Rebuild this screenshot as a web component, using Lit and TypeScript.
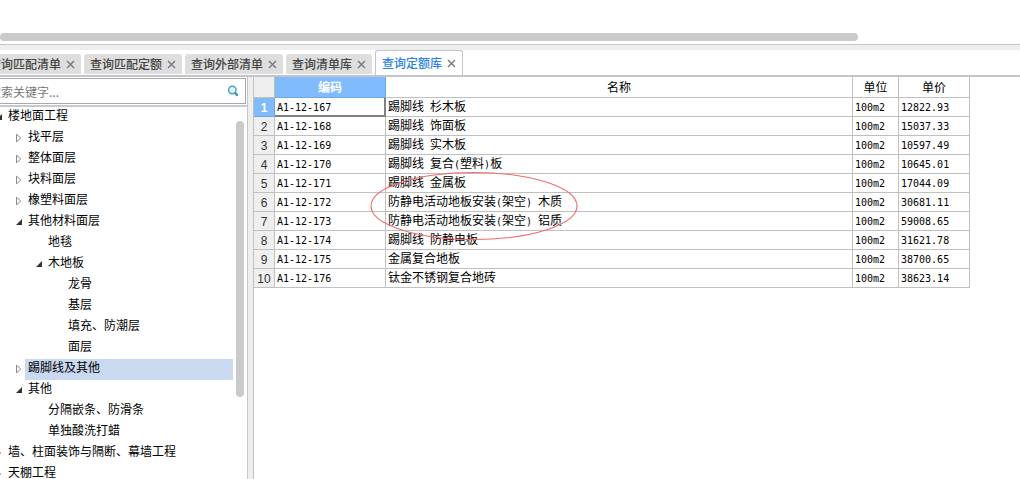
import { LitElement, html, css, svg } from "lit";
import { customElement, property, state } from "lit/decorators.js";

interface TreeNode {
  label: string;
  level: number;
  mark: "open" | "closed" | "leaf";
}

interface Quota {
  code: string;
  name: string;
  unit: string;
  price: string;
}

const TABS = ["查询匹配清单", "查询匹配定额", "查询外部清单", "查询清单库", "查询定额库"];

const TREE: TreeNode[] = [
  { label: "楼地面工程", level: 0, mark: "open" },
  { label: "找平层", level: 1, mark: "closed" },
  { label: "整体面层", level: 1, mark: "closed" },
  { label: "块料面层", level: 1, mark: "closed" },
  { label: "橡塑料面层", level: 1, mark: "closed" },
  { label: "其他材料面层", level: 1, mark: "open" },
  { label: "地毯", level: 2, mark: "leaf" },
  { label: "木地板", level: 2, mark: "open" },
  { label: "龙骨", level: 3, mark: "leaf" },
  { label: "基层", level: 3, mark: "leaf" },
  { label: "填充、防潮层", level: 3, mark: "leaf" },
  { label: "面层", level: 3, mark: "leaf" },
  { label: "踢脚线及其他", level: 1, mark: "closed" },
  { label: "其他", level: 1, mark: "open" },
  { label: "分隔嵌条、防滑条", level: 2, mark: "leaf" },
  { label: "单独酸洗打蜡", level: 2, mark: "leaf" },
  { label: "墙、柱面装饰与隔断、幕墙工程", level: 0, mark: "closed" },
  { label: "天棚工程", level: 0, mark: "closed" },
];

const QUOTAS: Quota[] = [
  { code: "A1-12-167", name: "踢脚线 杉木板", unit: "100m2", price: "12822.93" },
  { code: "A1-12-168", name: "踢脚线 饰面板", unit: "100m2", price: "15037.33" },
  { code: "A1-12-169", name: "踢脚线 实木板", unit: "100m2", price: "10597.49" },
  { code: "A1-12-170", name: "踢脚线 复合(塑料)板", unit: "100m2", price: "10645.01" },
  { code: "A1-12-171", name: "踢脚线 金属板", unit: "100m2", price: "17044.09" },
  { code: "A1-12-172", name: "防静电活动地板安装(架空) 木质", unit: "100m2", price: "30681.11" },
  { code: "A1-12-173", name: "防静电活动地板安装(架空) 铝质", unit: "100m2", price: "59008.65" },
  { code: "A1-12-174", name: "踢脚线 防静电板", unit: "100m2", price: "31621.78" },
  { code: "A1-12-175", name: "金属复合地板", unit: "100m2", price: "38700.65" },
  { code: "A1-12-176", name: "钛金不锈钢复合地砖", unit: "100m2", price: "38623.14" },
];

@customElement("tab-strip")
class TabStrip extends LitElement {
  @state() private active = 4;

  static styles = css`
    :host {
      display: block;
    }
    .strip {
      display: flex;
      align-items: flex-end;
      gap: 3px;
      height: 27px;
      box-sizing: border-box;
      border-bottom: 2px solid #c3c3c9;
      margin-left: -17px;
    }
    .tab {
      display: flex;
      align-items: center;
      gap: 4px;
      height: 20px;
      margin-bottom: 1px;
      padding: 0 5px 0 6px;
      background: #dedede;
      border-radius: 3px 3px 0 0;
      color: #444;
    }
    .tab.active {
      height: 24px;
      margin-bottom: 0;
      background: #fff;
      border: 1px solid #c3c3c9;
      border-bottom: 0;
      color: #2a82e4;
    }
    button {
      margin: 0;
      padding: 0;
      border: 0;
      background: none;
      color: inherit;
      font: 500 12px/18px "Noto Sans CJK SC", sans-serif;
      white-space: nowrap;
    }
    .tab .close {
      display: flex;
      color: #777;
    }
  `;

  render() {
    return html`<div class="strip" role="tablist">
      ${TABS.map(
        (t, i) => html`<div class="tab ${i === this.active ? "active" : ""}">
          <button role="tab" aria-selected=${i === this.active} @click=${() => (this.active = i)}>${t}</button>
          <button class="close" aria-label="关闭">
            <svg width="11" height="11" viewBox="0 0 11 11">
              <path d="M2 2l7 7M9 2l-7 7" stroke="currentColor" stroke-width="1.4" fill="none" />
            </svg>
          </button>
        </div>`
      )}
    </div>`;
  }
}

@customElement("category-tree")
class CategoryTree extends LitElement {
  @state() private selected = 12;

  static styles = css`
    :host {
      display: flex;
      flex-direction: column;
      min-height: 0;
      font: 12px/15px "Noto Sans CJK SC", sans-serif;
      color: #000;
    }
    .search {
      display: flex;
      align-items: center;
      margin: 1px 1px 1px 0;
      border: 1px solid #a9a9ad;
      height: 24px;
      padding-right: 6px;
    }
    input {
      flex: 1;
      min-width: 0;
      border: 0;
      outline: 0;
      padding: 0 0 0 5px;
      height: 22px;
      background: none;
      font: 12px/18px "Noto Sans CJK SC", sans-serif;
      color: #333;
    }
    input::placeholder {
      color: #777;
      opacity: 1;
    }
    .go {
      display: flex;
      padding: 0;
      border: 0;
      background: none;
    }
    .body {
      flex: 1;
      min-height: 0;
      display: flex;
      border-top: 2px solid #c6c9d0;
      overflow: hidden;
    }
    ul {
      flex: 1;
      margin: 0;
      padding: 0;
      list-style: none;
    }
    li {
      display: flex;
      height: 21px;
    }
    .mark {
      flex: none;
      width: 9px;
      padding-top: 5px;
      box-sizing: border-box;
    }
    .mark svg {
      display: block;
    }
    .label {
      flex: 1;
      padding: 0 0 6px 3px;
      white-space: nowrap;
    }
    .selected .label {
      background: #c9d9ef;
    }
    .bar {
      width: 8px;
      height: 276px;
      margin: 14px 3px 0;
      border-radius: 4px;
      background: #cacaca;
    }
  `;

  private mark(kind: TreeNode["mark"]) {
    if (kind === "open")
      return html`<svg width="7" height="10" viewBox="0 0 7 10"><path d="M6 2V8H0z" fill="#333" /></svg>`;
    if (kind === "closed")
      return html`<svg width="7" height="10" viewBox="0 0 7 10">
        <path d="M0.5 1.2V8.8L4.8 5z" fill="#fff" stroke="#8a8a8a" />
      </svg>`;
    return "";
  }

  render() {
    return html`
      <div class="search">
        <input type="text" aria-label="搜索" placeholder="搜索关键字..." />
        <button class="go" aria-label="搜索">
          <svg width="12" height="12" viewBox="0 0 12 12">
            <circle cx="5.3" cy="5" r="3.7" fill="#eef7fc" stroke="#4a9fce" stroke-width="1.5" />
            <path d="M7.8 7.6L10.6 10.8" stroke="#2c8cc4" stroke-width="2.2" />
          </svg>
        </button>
      </div>
      <div class="body">
        <ul role="tree">
          ${TREE.map(
            (n, i) => html`<li
              role="treeitem"
              class=${i === this.selected ? "selected" : ""}
              style="padding-left:${n.level * 20 + 13}px"
              @click=${() => (this.selected = i)}
            >
              <span class="mark">${this.mark(n.mark)}</span><span class="label">${n.label}</span>
            </li>`
          )}
        </ul>
        <div class="bar"></div>
      </div>
    `;
  }
}

@customElement("quota-grid")
class QuotaGrid extends LitElement {
  @property({ attribute: false }) rows: Quota[] = [];

  static styles = css`
    :host {
      display: block;
      position: relative;
      margin-right: 50px;
    }
    table {
      width: 100%;
      table-layout: fixed;
      border-collapse: separate;
      border-spacing: 0;
      font: 12px/16px "Noto Sans CJK SC", sans-serif;
      color: #000;
    }
    .c-no {
      width: 21px;
    }
    .c-code {
      width: 111px;
    }
    .c-unit {
      width: 46px;
    }
    .c-price {
      width: 71px;
    }
    th,
    td {
      box-sizing: border-box;
      height: 19px;
      padding: 0 0 2px 2px;
      border-right: 1px solid #c0c0c0;
      border-bottom: 1px solid #c0c0c0;
      text-align: left;
      white-space: nowrap;
      overflow: hidden;
    }
    thead th {
      height: 21px;
      padding: 2px 0;
      text-align: center;
      font-weight: 400;
    }
    .no {
      padding: 2px 0 0;
      background: #efefef;
      color: #333;
      text-align: center;
      font: 12px/16px "Liberation Sans", sans-serif;
    }
    thead .picked,
    .no.picked {
      background: #80bbfc;
      border-color: #6aa8ec;
      color: #fff;
      font-weight: 700;
    }
    .current {
      box-shadow: inset -1px -1px 0 #808080;
      border-right-color: #808080;
      border-bottom-color: #808080;
    }
    .half {
      font: 10px/10px "DejaVu Sans Mono", monospace;
      white-space: pre;
    }
    .ring {
      position: absolute;
      left: 115px;
      top: 94px;
      pointer-events: none;
    }
  `;

  /* Latin runs take half of a Han character's width. */
  private mixed(text: string) {
    return text
      .split(/([\x20-\x7e]+)/)
      .filter(Boolean)
      .map((part) => (/^[\x20-\x7e]/.test(part) ? html`<span class="half">${part}</span>` : part));
  }

  render() {
    return html`<table>
        <colgroup>
          <col class="c-no" />
          <col class="c-code" />
          <col />
          <col class="c-unit" />
          <col class="c-price" />
        </colgroup>
        <thead>
          <tr>
            <th class="no"></th>
            <th class="picked" scope="col">编码</th>
            <th scope="col">名称</th>
            <th scope="col">单位</th>
            <th scope="col">单价</th>
          </tr>
        </thead>
        <tbody>
          ${this.rows.map(
            (r, i) => html`<tr>
              <th scope="row" class="no ${i === 0 ? "picked" : ""}">${i + 1}</th>
              <td class=${i === 0 ? "current" : ""}>${this.mixed(r.code)}</td>
              <td>${this.mixed(r.name)}</td>
              <td>${this.mixed(r.unit)}</td>
              <td>${this.mixed(r.price)}</td>
            </tr>`
          )}
        </tbody>
      </table>
      <svg class="ring" width="210" height="70" viewBox="0 0 210 70">
        ${svg`<ellipse cx="105" cy="35" rx="103" ry="33.5" fill="none" stroke="#f26a6a" stroke-width="1.1" />`}
      </svg>`;
  }
}

@customElement("app-root")
class AppRoot extends LitElement {
  static styles = css`
    :host {
      display: flex;
      flex-direction: column;
      height: 100vh;
      overflow: hidden;
      background: #fff;
    }
    .upper {
      flex: none;
      padding: 33px 162px 3px 0;
    }
    .hbar {
      height: 8px;
      border-radius: 4px;
      background: #cacaca;
    }
    .split {
      flex: none;
      height: 5px;
      border-top: 1px solid #c6c6c6;
      background: #eee;
    }
    tab-strip {
      flex: none;
    }
    .main {
      flex: 1;
      min-height: 0;
      display: grid;
      grid-template-columns: 264px 6px 1fr;
      grid-template-rows: 100%;
      margin-left: -17px;
    }
    .divider {
      background: #eee;
      border-left: 1px solid #c6c6c6;
    }
    .grid {
      min-width: 0;
      border-left: 1px solid #c0c0c0;
    }
  `;

  render() {
    return html`
      <div class="upper"><div class="hbar"></div></div>
      <div class="split"></div>
      <tab-strip></tab-strip>
      <div class="main">
        <category-tree></category-tree>
        <div class="divider"></div>
        <div class="grid"><quota-grid .rows=${QUOTAS}></quota-grid></div>
      </div>
    `;
  }
}
